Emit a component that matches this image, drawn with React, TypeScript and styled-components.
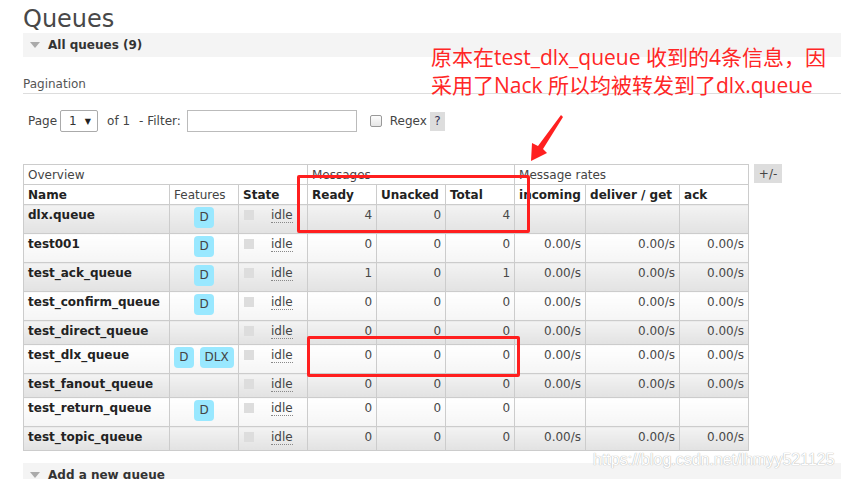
import * as React from 'react'
import styled, { createGlobalStyle } from 'styled-components'

const GlobalStyle = createGlobalStyle`
  html, body {
    margin: 0;
    padding: 0;
    background: #fff;
  }
  body {
    font-family: "DejaVu Sans", Verdana, sans-serif;
    font-size: 12px;
    color: #444;
    overflow: hidden;
  }
`

const Page = styled.div`
  position: relative;
  width: 841px;
  height: 479px;
  padding-left: 23px;
  box-sizing: border-box;
  overflow: hidden;
`

const Title = styled.h1`
  margin: 5px 0 0;
  font-size: 24px;
  line-height: 28px;
  font-weight: normal;
  color: #484848;
`

const SectionBar = styled.div<{ $top?: number }>`
  display: flex;
  align-items: center;
  height: 24px;
  margin-top: ${p => p.$top ?? 0}px;
  padding-left: 7px;
  background: #f4f4f4;
  font-weight: bold;
  color: #333;
`

const Toggle = styled.span`
  width: 0;
  height: 0;
  margin-right: 8px;
  border-left: 5px solid transparent;
  border-right: 5px solid transparent;
  border-top: 6px solid #aaa;
`

const SubHeading = styled.div`
  margin-top: 19px;
  padding-bottom: 1px;
  line-height: 16px;
  color: #555;
  border-bottom: 1px solid #ddd;
`

const Controls = styled.div`
  display: flex;
  align-items: center;
  height: 22px;
  margin-top: 16px;
  padding-left: 5px;
`

const Label = styled.span<{ $gap?: number }>`
  margin-right: ${p => p.$gap ?? 0}px;
  color: #444;
  white-space: pre;
`

const SelectBox = styled.div`
  display: flex;
  align-items: center;
  box-sizing: border-box;
  width: 38px;
  height: 22px;
  margin-right: 9px;
  padding-left: 8px;
  border: 1px solid #aaa;
  border-radius: 2px;
  color: #333;
`

const Caret = styled.span`
  margin-left: 8px;
  font-size: 8px;
  color: #222;
`

const FilterInput = styled.input`
  box-sizing: border-box;
  width: 170px;
  height: 22px;
  margin: 0 13px 0 0;
  border: 1px solid #bbb;
  padding: 0 4px;
`

const CheckBox = styled.span`
  box-sizing: border-box;
  width: 12px;
  height: 12px;
  margin-right: 8px;
  border: 1px solid #999;
  border-radius: 2px;
  background: linear-gradient(#fdfdfd, #e6e6e6);
`

const HelpButton = styled.span`
  display: inline-flex;
  align-items: center;
  justify-content: center;
  width: 15px;
  height: 19px;
  background: #ddd;
  color: #335;
`

const TableArea = styled.div`
  display: flex;
  align-items: flex-start;
  margin-top: 32px;
`

const Table = styled.table`
  border-collapse: collapse;
  table-layout: fixed;
  width: 726px;
  font-size: 12px;
`

const Th = styled.th<{ $bold?: boolean }>`
  padding: 3px 4px 1px;
  line-height: 15px;
  border: 1px solid #ccc;
  background: #fff;
  text-align: left;
  white-space: nowrap;
  font-weight: ${p => (p.$bold ? 'bold' : 'normal')};
  color: ${p => (p.$bold ? '#222' : '#444')};
`

const Row = styled.tr<{ $odd: boolean }>`
  td {
    background: ${p =>
      p.$odd ? 'linear-gradient(#f3f3f3, #e2e2e2)' : 'linear-gradient(#ffffff, #f5f5f5)'};
  }
`

const Td = styled.td<{ $align?: 'left' | 'right' | 'center' }>`
  padding: 2px 4px 5px;
  line-height: 16px;
  border: 1px solid #ccc;
  vertical-align: top;
  white-space: nowrap;
  text-align: ${p => p.$align ?? 'left'};
  color: #484848;
`

const QueueName = styled.span`
  font-weight: bold;
  color: #222;
`

const Badges = styled.span`
  display: inline-flex;
  gap: 6px;
  vertical-align: top;
`

const Badge = styled.span`
  display: inline-block;
  height: 21px;
  padding: 0 5px;
  line-height: 21px;
  border-radius: 4px;
  background: #99e8ff;
  color: #444;
`

const StateDot = styled.span`
  display: inline-block;
  width: 10px;
  height: 10px;
  margin: 3px 17px 0 1px;
  vertical-align: top;
  background: #ddd;
`

const StateText = styled.span`
  border-bottom: 1px dotted #888;
  color: #444;
`

const ToggleColumns = styled.div`
  display: flex;
  align-items: center;
  justify-content: center;
  width: 28px;
  height: 19px;
  margin-left: 5px;
  background: #ddd;
  color: #444;
`

const Annotation = styled.div`
  position: absolute;
  left: 431px;
  top: 43px;
  font-family: "Open Sans", "Noto Sans CJK SC", sans-serif;
  font-size: 21px;
  line-height: 28px;
  color: #ff2626;
  white-space: nowrap;
`

const Highlight = styled.div<{ $x: number; $y: number; $w: number; $h: number }>`
  position: absolute;
  left: ${p => p.$x}px;
  top: ${p => p.$y}px;
  width: ${p => p.$w}px;
  height: ${p => p.$h}px;
  box-sizing: border-box;
  border: 3px solid #ff1f1f;
  border-radius: 2px;
`

const Arrow = styled.svg`
  position: absolute;
  left: 528px;
  top: 113px;
`

const Watermark = styled.div`
  position: absolute;
  left: 593px;
  top: 451px;
  font-family: "Liberation Sans", Arial, sans-serif;
  font-size: 16px;
  line-height: 18px;
  color: #fff;
  text-shadow: 0 0 1px #aaa, 0 0 1px #ccc;
`

type Queue = {
  name: string
  features: string[]
  ready: number
  unacked: number
  total: number
  rates: boolean
}

const queues: Queue[] = [
  { name: 'dlx.queue', features: ['D'], ready: 4, unacked: 0, total: 4, rates: false },
  { name: 'test001', features: ['D'], ready: 0, unacked: 0, total: 0, rates: true },
  { name: 'test_ack_queue', features: ['D'], ready: 1, unacked: 0, total: 1, rates: true },
  { name: 'test_confirm_queue', features: ['D'], ready: 0, unacked: 0, total: 0, rates: true },
  { name: 'test_direct_queue', features: [], ready: 0, unacked: 0, total: 0, rates: true },
  { name: 'test_dlx_queue', features: ['D', 'DLX'], ready: 0, unacked: 0, total: 0, rates: true },
  { name: 'test_fanout_queue', features: [], ready: 0, unacked: 0, total: 0, rates: true },
  { name: 'test_return_queue', features: ['D'], ready: 0, unacked: 0, total: 0, rates: false },
  { name: 'test_topic_queue', features: [], ready: 0, unacked: 0, total: 0, rates: true },
]

const columnWidths = [146, 69, 69, 69, 69, 69, 71, 94, 69]

const QueueRow = ({ q, index }: { q: Queue; index: number }) => (
  <Row $odd={index % 2 === 0}>
    <Td>
      <QueueName>{q.name}</QueueName>
    </Td>
    <Td $align="center">
      {q.features.length > 0 && (
        <Badges>
          {q.features.map(f => (
            <Badge key={f}>{f}</Badge>
          ))}
        </Badges>
      )}
    </Td>
    <Td>
      <StateDot />
      <StateText>idle</StateText>
    </Td>
    <Td $align="right">{q.ready}</Td>
    <Td $align="right">{q.unacked}</Td>
    <Td $align="right">{q.total}</Td>
    <Td $align="right">{q.rates ? '0.00/s' : ''}</Td>
    <Td $align="right">{q.rates ? '0.00/s' : ''}</Td>
    <Td $align="right">{q.rates ? '0.00/s' : ''}</Td>
  </Row>
)

const App = () => (
  <Page>
    <GlobalStyle />
    <Title>Queues</Title>
    <SectionBar>
      <Toggle />
      All queues (9)
    </SectionBar>

    <SubHeading>Pagination</SubHeading>
    <Controls>
      <Label $gap={3}>Page</Label>
      <SelectBox>
        1<Caret>▼</Caret>
      </SelectBox>
      <Label $gap={9}>of 1</Label>
      <Label $gap={6}>- Filter:</Label>
      <FilterInput type="text" />
      <CheckBox />
      <Label $gap={3}>Regex</Label>
      <HelpButton>?</HelpButton>
    </Controls>

    <TableArea>
      <Table>
        <colgroup>
          {columnWidths.map((w, i) => (
            <col key={i} style={{ width: w }} />
          ))}
        </colgroup>
        <thead>
          <tr>
            <Th colSpan={3}>Overview</Th>
            <Th colSpan={3}>Messages</Th>
            <Th colSpan={3}>Message rates</Th>
          </tr>
          <tr>
            <Th $bold>Name</Th>
            <Th>Features</Th>
            <Th $bold>State</Th>
            <Th $bold>Ready</Th>
            <Th $bold>Unacked</Th>
            <Th $bold>Total</Th>
            <Th $bold>incoming</Th>
            <Th $bold>deliver / get</Th>
            <Th $bold>ack</Th>
          </tr>
        </thead>
        <tbody>
          {queues.map((q, i) => (
            <QueueRow key={q.name} q={q} index={i} />
          ))}
        </tbody>
      </Table>
      <ToggleColumns>+/-</ToggleColumns>
    </TableArea>

    <SectionBar $top={12}>
      <Toggle />
      Add a new queue
    </SectionBar>

    <Annotation>
      原本在test_dlx_queue 收到的4条信息，因
      <br />
      采用了Nack 所以均被转发到了dlx.queue
    </Annotation>
    <Arrow width="40" height="52" viewBox="0 0 40 52">
      <polygon points="33,2 35,4 15,36 19,40 3,48 4,30 10,33" fill="#ff2020" />
    </Arrow>
    <Highlight $x={297} $y={175} $w={233} $h={58} />
    <Highlight $x={307} $y={336} $w={213} $h={41} />
    <Watermark>https://blog.csdn.net/lhmyy521125</Watermark>
  </Page>
)

export default App
